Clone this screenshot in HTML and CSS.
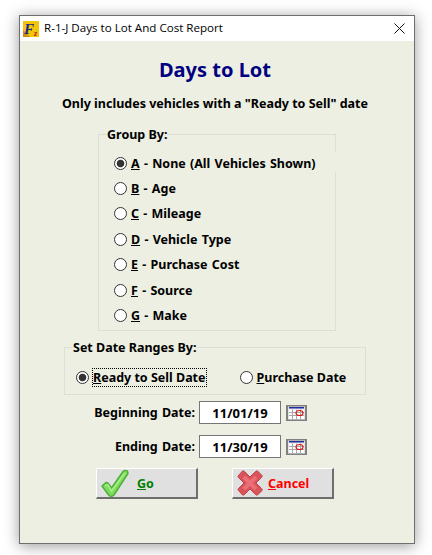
FILE: index.html
```html
<!DOCTYPE html>
<html>
<head>
  <meta charset="UTF-8">
  <title>R-1-J Days to Lot And Cost Report</title>
  <link rel="stylesheet" href="styles.css">
</head>
<body>
  <div class="window">
    <div class="titlebar">
      <svg class="app-icon" width="16" height="16" viewBox="0 0 16 16">
        <rect width="16" height="16" fill="#f2c40c"/>
        <path d="M0 16 L0 9 L7 16 Z" fill="#c9920a"/>
        <text x="1" y="12.5" class="icon-f">F</text>
        <text x="11" y="15" class="icon-z">z</text>
      </svg>
      <span class="title-text">R-1-J Days to Lot And Cost Report</span>
      <svg class="close-icon" width="11" height="11" viewBox="0 0 11 11">
        <path d="M0.5 0.5 L10.5 10.5 M10.5 0.5 L0.5 10.5" stroke="#111" stroke-width="1" fill="none"/>
      </svg>
    </div>

    <div class="content">
      <h1 class="heading">Days to Lot</h1>
      <p class="subheading">Only includes vehicles with a "Ready to Sell" date</p>

      <fieldset class="group group-by">
        <legend>Group By:</legend>
        <div class="radio-row row-active"><span class="radio checked"></span><span><u>A</u> - None (All Vehicles Shown)</span></div>
        <div class="radio-row"><span class="radio"></span><span><u>B</u> - Age</span></div>
        <div class="radio-row"><span class="radio"></span><span><u>C</u> - Mileage</span></div>
        <div class="radio-row"><span class="radio"></span><span><u>D</u> - Vehicle Type</span></div>
        <div class="radio-row"><span class="radio"></span><span><u>E</u> - Purchase Cost</span></div>
        <div class="radio-row"><span class="radio"></span><span><u>F</u> - Source</span></div>
        <div class="radio-row"><span class="radio"></span><span><u>G</u> - Make</span></div>
      </fieldset>

      <fieldset class="group date-range">
        <legend>Set Date Ranges By:</legend>
        <div class="range-row">
          <div class="range-option"><span class="radio checked"></span><span class="focused"><u>R</u>eady to Sell Date</span></div>
          <div class="range-option"><span class="radio"></span><span><u>P</u>urchase Date</span></div>
        </div>
      </fieldset>

      <div class="date-row">
        <label class="date-label">Beginning Date:</label>
        <div class="date-box">11/01/19</div>
        <svg class="cal-icon" width="21" height="16" viewBox="0 0 21 16">
          <use href="#cal"/>
        </svg>
      </div>
      <div class="date-row">
        <label class="date-label">Ending Date:</label>
        <div class="date-box">11/30/19</div>
        <svg class="cal-icon" width="21" height="16" viewBox="0 0 21 16">
          <use href="#cal"/>
        </svg>
      </div>

      <div class="buttons">
        <div class="btn btn-go">
          <svg width="30" height="29" viewBox="0 0 30 29">
            <path d="M2 17 L6 13.5 Q8 13 9.5 16 L11.5 19 L23 2.5 Q25 0.5 27.5 2 L28 4.5 L14 26 Q11.5 28.5 9 26.5 Z" fill="#7ddc5c" stroke="#4fae3a" stroke-width="1.4" stroke-linejoin="round"/>
            <path d="M5 17 L8 16 L11.5 22 L25 4" fill="none" stroke="#a8ee88" stroke-width="1.6"/>
          </svg>
          <span class="btn-label"><u>G</u>o</span>
        </div>
        <div class="btn btn-cancel">
          <svg width="28" height="28" viewBox="0 0 28 28">
            <path d="M2.5 6.5 L6.5 2 Q7.5 1.5 8.5 2.5 L14 8 L19.5 2.5 Q20.5 1.5 21.5 2 L26 6.5 Q26.5 7.5 25.5 8.5 L20 14 L25.5 19.5 Q26.5 20.5 26 21.5 L21.5 26 Q20.5 26.5 19.5 25.5 L14 20 L8.5 25.5 Q7.5 26.5 6.5 26 L2.5 21.5 Q1.5 20.5 2.5 19.5 L8 14 L2.5 8.5 Q1.5 7.5 2.5 6.5 Z" fill="#d9535b" stroke="#bd4148" stroke-width="1"/>
            <path d="M8 8 L20 20 M20 8 L8 20" stroke="#ec6f75" stroke-width="4"/>
          </svg>
          <span class="btn-label"><u>C</u>ancel</span>
        </div>
      </div>
    </div>
  </div>

  <svg class="defs" width="0" height="0">
    <defs>
      <g id="cal">
        <rect x="0" y="0" width="21" height="16" fill="#808080"/>
        <rect x="2" y="1.5" width="17" height="13" fill="#e4e4e4"/>
        <rect x="3" y="2" width="15" height="1.5" fill="#1f2fa0"/>
        <rect x="3" y="4.5" width="15" height="9.5" fill="#fff"/>
        <path d="M6.5 4.5 V14 M10.5 4.5 V14 M14.5 4.5 V14 M3 7.5 H18 M3 10.5 H18" stroke="#a8a8a8" stroke-width="1"/>
        <ellipse cx="13.5" cy="8" rx="3.5" ry="2.5" fill="none" stroke="#d81010" stroke-width="1.2"/>
      </g>
    </defs>
  </svg>
</body>
</html>
```

FILE: styles.css
```css
html, body {
  margin: 0;
  height: 100%;
  overflow: hidden;
}
body {
  background: #fff;
  padding: 15px 17px 0 19px;
  box-sizing: border-box;
  font-family: "Noto Sans", "DejaVu Sans", sans-serif;
  color: #000;
}
.defs {
  display: block;
  height: 0;
}
.window {
  width: 396px;
  height: 529px;
  box-sizing: border-box;
  border: 1px solid #6e6e6e;
  background: #ecefe2;
  box-shadow: 0 2px 14px rgba(0, 0, 0, 0.4);
  display: flex;
  flex-direction: column;
}
.titlebar {
  height: 25px;
  background: #fff;
  display: flex;
  align-items: center;
  padding: 0 9px 0 3px;
  flex: none;
}
.app-icon {
  margin-right: 5px;
}
.icon-f {
  font: italic bold 15px "Liberation Serif", serif;
  fill: #1a2a8c;
}
.icon-z {
  font: italic bold 8px "Liberation Serif", serif;
  fill: #c01818;
}
.title-text {
  font-size: 11.6px;
  flex: 1;
  margin-bottom: 2px;
  font-family: "Open Sans", sans-serif;
}
.content {
  flex: 1;
  display: flex;
  flex-direction: column;
  align-items: center;
  padding-right: 4px;
}
.heading {
  margin: 15px 0 0;
  font-size: 20px;
  line-height: 27px;
  font-weight: bold;
  color: #000080;
}
.subheading {
  margin: 12px 0 0;
  font-size: 12.5px;
  line-height: 17px;
  font-weight: bold;
}
.group {
  margin: 0;
  padding: 0;
  box-sizing: border-box;
  border: 1px solid #dcdfd8;
  min-width: 0;
}
.group legend {
  font-size: 12.5px;
  line-height: 17px;
  font-weight: bold;
  padding: 0;
}
.group-by {
  width: 238px;
  height: 205px;
  margin: 14px 0 0 4px;
  padding: 7px 0 0 8px;
}
.radio-row {
  height: 25.5px;
  display: flex;
  align-items: center;
  margin-left: 7px;
  font-size: 12.5px;
  font-weight: bold;
  word-spacing: 1px;
  gap: 4px;
}
.row-active {
  height: 20px;
  box-sizing: border-box;
  padding-top: 2px;
  margin-top: 2px;
  margin-right: -1px;
  margin-bottom: 3.5px;
  background: #ecefe2;
}
.radio {
  width: 13px;
  height: 13px;
  box-sizing: border-box;
  border: 1px solid #333;
  border-radius: 50%;
  background: #fff;
  flex: none;
}
.checked {
  background: radial-gradient(circle, #333 0, #333 3.4px, #fff 4.2px);
}
.date-range {
  width: 302px;
  height: 56px;
  margin-top: 8px;
  padding: 0 0 0 8px;
}
.range-row {
  display: flex;
  font-size: 12.5px;
  font-weight: bold;
  height: 24px;
  align-items: center;
  margin-top: 9px;
  margin-left: 3px;
}
.range-option {
  display: flex;
  align-items: center;
  gap: 4px;
}
.range-option + .range-option {
  margin-left: 33px;
}
.focused {
  margin-left: -1px;
  padding: 0 1px;
  line-height: 19px;
  outline: 1px dotted #000;
  outline-offset: -1px;
}
.date-row {
  display: flex;
  align-items: center;
  align-self: flex-start;
  margin-top: 6px;
  height: 23px;
}
.date-row + .date-row {
  margin-top: 11px;
}
.date-label {
  width: 175px;
  text-align: right;
  font-size: 12.5px;
  font-weight: bold;
  word-spacing: 1px;
}
.date-box {
  width: 82px;
  height: 23px;
  box-sizing: border-box;
  margin-left: 4px;
  border: 1px solid #767676;
  background: #fff;
  font-size: 13px;
  font-weight: bold;
  line-height: 22px;
  text-align: center;
}
.cal-icon {
  margin-left: 5px;
}
.buttons {
  display: flex;
  gap: 34px;
  margin-top: 10px;
}
.btn {
  width: 102px;
  height: 31px;
  box-sizing: border-box;
  background: #e0e0e0;
  border-style: solid;
  border-width: 1px 2px 2px 1px;
  border-color: #fff #6e6e6e #6e6e6e #fff;
  display: flex;
  align-items: center;
  padding-left: 3px;
  font-size: 12.5px;
  font-weight: bold;
}
.btn-label {
  margin-left: 7px;
}
.btn-go {
  color: #008000;
}
.btn-cancel {
  color: #ff0000;
}
.btn-cancel .btn-label {
  margin-left: 4px;
}
```
